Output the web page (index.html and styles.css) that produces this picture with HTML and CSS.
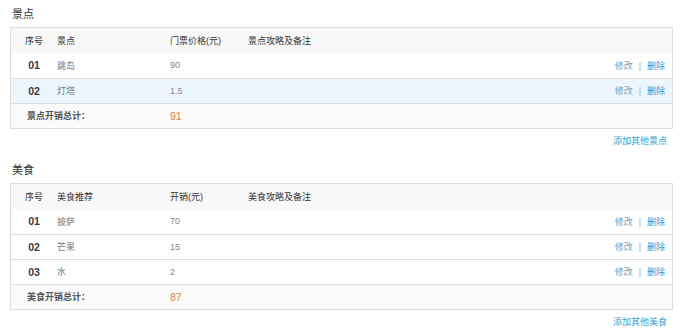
FILE: index.html
```html
<!DOCTYPE html>
<html lang="zh">
<head>
<meta charset="utf-8">
<title>开销</title>
<link rel="stylesheet" href="styles.css">
</head>
<body>
<div class="page">
  <section class="section">
    <h2 class="section-title">景点</h2>
    <div class="table-box">
      <table class="cost-table">
        <colgroup><col class="c1"><col class="c2"><col class="c3"><col class="c4"><col class="c5"></colgroup>
        <thead>
          <tr><th class="num">序号</th><th>景点</th><th>门票价格(元)</th><th>景点攻略及备注</th><th></th></tr>
        </thead>
        <tbody>
          <tr><td class="num">01</td><td class="name">跳岛</td><td class="price">90</td><td></td><td class="actions"><a class="edit">修改</a><span class="sep">|</span><a class="del">删除</a></td></tr>
          <tr class="hover"><td class="num">02</td><td class="name">灯塔</td><td class="price">1.5</td><td></td><td class="actions"><a class="edit">修改</a><span class="sep">|</span><a class="del">删除</a></td></tr>
          <tr class="total"><td colspan="2" class="total-label">景点开销总计：</td><td class="total-value">91</td><td></td><td></td></tr>
        </tbody>
      </table>
    </div>
    <div class="add-row"><a class="add">添加其他景点</a></div>
  </section>
  <section class="section second">
    <h2 class="section-title">美食</h2>
    <div class="table-box">
      <table class="cost-table">
        <colgroup><col class="c1"><col class="c2"><col class="c3"><col class="c4"><col class="c5"></colgroup>
        <thead>
          <tr><th class="num">序号</th><th>美食推荐</th><th>开销(元)</th><th>美食攻略及备注</th><th></th></tr>
        </thead>
        <tbody>
          <tr><td class="num">01</td><td class="name">披萨</td><td class="price">70</td><td></td><td class="actions"><a class="edit">修改</a><span class="sep">|</span><a class="del">删除</a></td></tr>
          <tr><td class="num">02</td><td class="name">芒果</td><td class="price">15</td><td></td><td class="actions"><a class="edit">修改</a><span class="sep">|</span><a class="del">删除</a></td></tr>
          <tr><td class="num">03</td><td class="name">水</td><td class="price">2</td><td></td><td class="actions"><a class="edit">修改</a><span class="sep">|</span><a class="del">删除</a></td></tr>
          <tr class="total"><td colspan="2" class="total-label">美食开销总计：</td><td class="total-value">87</td><td></td><td></td></tr>
        </tbody>
      </table>
    </div>
    <div class="add-row"><a class="add">添加其他美食</a></div>
  </section>
</div>
</body>
</html>
```

FILE: styles.css
```css
* { box-sizing: border-box; }
html, body { margin: 0; padding: 0; background: #fff; }
body {
  font-family: "Liberation Sans", "Noto Sans CJK SC", sans-serif;
  font-size: 9px;
  color: #666;
}
.page { padding: 8px 8px 0 10px; width: 680px; }
.section-title {
  margin: 0 0 7px 2px;
  font-size: 11px;
  line-height: 12px;
  height: 12px;
  font-weight: normal;
  color: #333;
}
.second { margin-top: 17px; }
.table-box {
  width: 663px;
  border: 1px solid #dcdcdc;
}
.cost-table {
  width: 100%;
  border-collapse: collapse;
  table-layout: fixed;
}
.c1 { width: 46px; }
.c2 { width: 113px; }
.c3 { width: 78px; }
.c4 { width: 300px; }
.cost-table th {
  height: 25px;
  padding: 0;
  text-align: left;
  font-weight: normal;
  color: #333;
  background: #f8f8f8;
}
.cost-table td {
  height: 25px;
  padding: 0;
  border-top: 1px solid #dedede;
  text-align: left;
}
.cost-table tbody tr:first-child td { border-top: none; }
.cost-table .num { text-align: center; }
.cost-table td.num { font-size: 10.5px; font-weight: bold; color: #3a3a3a; }
.name { color: #777; }
.price { color: #888; }
.hover td { background: #eef6fd; }
.total td { background: #fafafa; }
.total-label { padding-left: 16px !important; font-weight: bold; color: #555; }
.total-value { color: #e0803e; font-size: 10.5px; }
.actions { text-align: right !important; padding-right: 7px !important; }
.edit { color: #6ca6c4; }
.sep { color: #9aa; margin: 0 6px; }
.del { color: #3393cf; }
.add-row {
  width: 663px;
  margin-top: 6px;
  line-height: 12px;
  text-align: right;
  padding-right: 6px;
}
.add { color: #3a9bd0; }
```
